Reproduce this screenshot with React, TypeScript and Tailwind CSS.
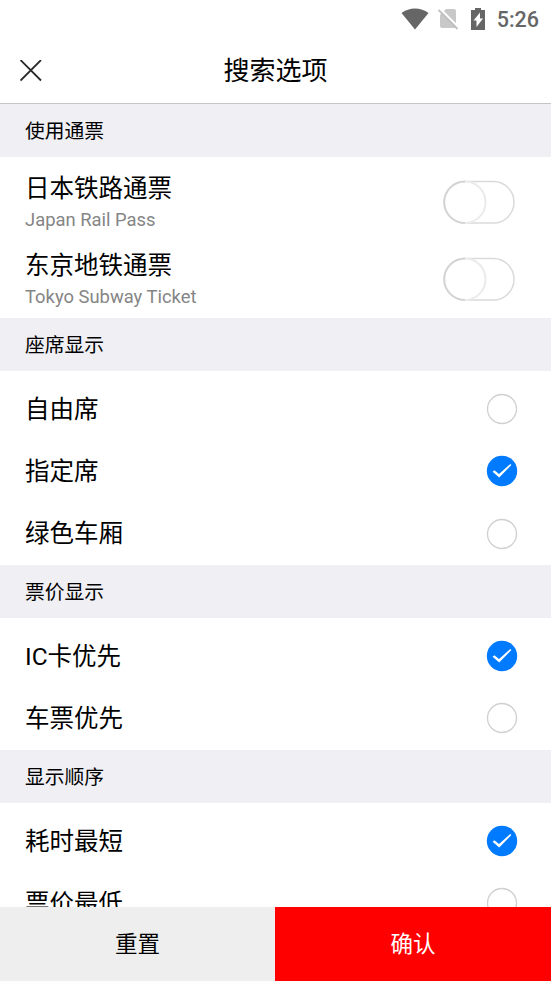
import React from "react";

const Section: React.FC<{ title: string; children: React.ReactNode }> = ({ title, children }) => {
  return (
    <section className="shrink-0">
      <h2 className="h-[53px] bg-[#efeff4] px-[25px] text-[19.8px] leading-[55px]">{title}</h2>
      {children}
    </section>
  );
};

const PassRow: React.FC<{ name: string; sub: string }> = ({ name, sub }) => {
  return (
    <div className="flex h-[76.5px] items-center justify-between pr-9 pl-[25px]">
      <div>
        <p className="text-[24.5px] leading-[36px]">{name}</p>
        <p className="text-[18.4px] leading-[26px] text-[#858585]">{sub}</p>
      </div>
      <svg width="72" height="44" viewBox="0 0 72 44" fill="none">
        <rect x="1" y="1.500" width="70" height="41.500" rx="20.700" stroke="#dadada" strokeWidth="1.5" />
        <path d="M22 1.500a20.500 20.700 0 0 1 0 41.400" stroke="#ebebeb" strokeWidth="2" />
        <path d="M22 1.500a20.700 20.700 0 0 0 0 41.400" stroke="#d4d4d4" strokeWidth="1.8" />
      </svg>
    </div>
  );
};

const OptionRow: React.FC<{ label: string; checked?: boolean }> = ({ label, checked }) => {
  return (
    <div className="flex h-[62.2px] items-center justify-between pr-[33px] pl-[25px]">
      <span className="pt-px text-[24.5px] leading-[36px]">{label}</span>
      <svg width="32" height="32" viewBox="0 0 32 32" fill="none">
        {checked ? (
          <>
            <circle cx="16" cy="16" r="15.2" fill="#007aff" />
            <path d="M6.6 16.8L8.4 15.2L13 18.9L24.300 9L25.400 10L13.200 22.400z" fill="#fff" />
          </>
        ) : (
          <circle cx="16" cy="16" r="14.5" stroke="#d0d0d0" strokeWidth="1.3" />
        )}
      </svg>
    </div>
  );
};

const StatusBar = () => {
  return (
    <div className="flex h-[38px] shrink-0 items-center justify-end pr-3 text-[#666]">
      <svg className="mr-[9px]" width="28" height="22" viewBox="0 0 28 22" fill="currentColor">
        <path d="M0.5 5C8-1 20-1 27.5 5L14 21.5z" />
      </svg>
      <svg className="mr-3" width="21" height="22" viewBox="0 0 21 22">
        <path d="M8 1h8q2 0 2 2v17H4q-2 0-2-2V7z" fill="#c8c8c8" />
        <path d="M1.800 0.500l19 19" stroke="#fff" strokeWidth="2" />
        <path d="M0.500 2l19 19" stroke="#c0c0c0" strokeWidth="1.8" />
      </svg>
      <svg className="mr-3" width="14" height="24" viewBox="0 0 14 24" fill="currentColor">
        <path d="M4 1h6v2h4v20H0V3h4z" />
        <path d="M9 5.500v6h3L5.500 20v-6.500H2.500z" fill="#fff" />
      </svg>
      <span className="pt-0.5 text-[21.500px] font-medium">5:26</span>
    </div>
  );
};

export default function App() {
  return (
    <div className="flex h-[981px] w-[551px] flex-col overflow-hidden bg-white font-['Roboto','Noto_Sans_CJK_SC',sans-serif] text-black">
      <StatusBar />
      <header className="grid h-[66px] shrink-0 grid-cols-[1fr_auto_1fr] items-center border-b border-[#c4c4c6] px-5">
        <svg width="22" height="22" viewBox="0 0 22 22" stroke="#2a2a2a" strokeWidth="1.8">
          <path d="M0.5 0l20.500 20.500M21 0L0.500 20.500" />
        </svg>
        <h1 className="text-[26px] leading-[38px]">搜索选项</h1>
      </header>
      <main className="min-h-0 flex-1 overflow-hidden">
        <Section title="使用通票">
          <div className="h-[161px] pt-[7px]">
            <PassRow name="日本铁路通票" sub="Japan Rail Pass" />
            <PassRow name="东京地铁通票" sub="Tokyo Subway Ticket" />
          </div>
        </Section>
        <Section title="座席显示">
          <div className="h-[194px] pt-[7.2px]">
            <OptionRow label="自由席" />
            <OptionRow label="指定席" checked />
            <OptionRow label="绿色车厢" />
          </div>
        </Section>
        <Section title="票价显示">
          <div className="h-[132px] pt-[7.2px]">
            <OptionRow label="IC卡优先" checked />
            <OptionRow label="车票优先" />
          </div>
        </Section>
        <Section title="显示顺序">
          <div className="pt-[7.2px]">
            <OptionRow label="耗时最短" checked />
            <OptionRow label="票价最低" />
          </div>
        </Section>
      </main>
      <footer className="flex h-[74px] shrink-0 text-[22.5px]">
        <button className="w-[275px] bg-[#eee] pt-0.5">重置</button>
        <button className="flex-1 bg-[#ff0000] pt-0.5 text-white">确认</button>
      </footer>
    </div>
  );
}
